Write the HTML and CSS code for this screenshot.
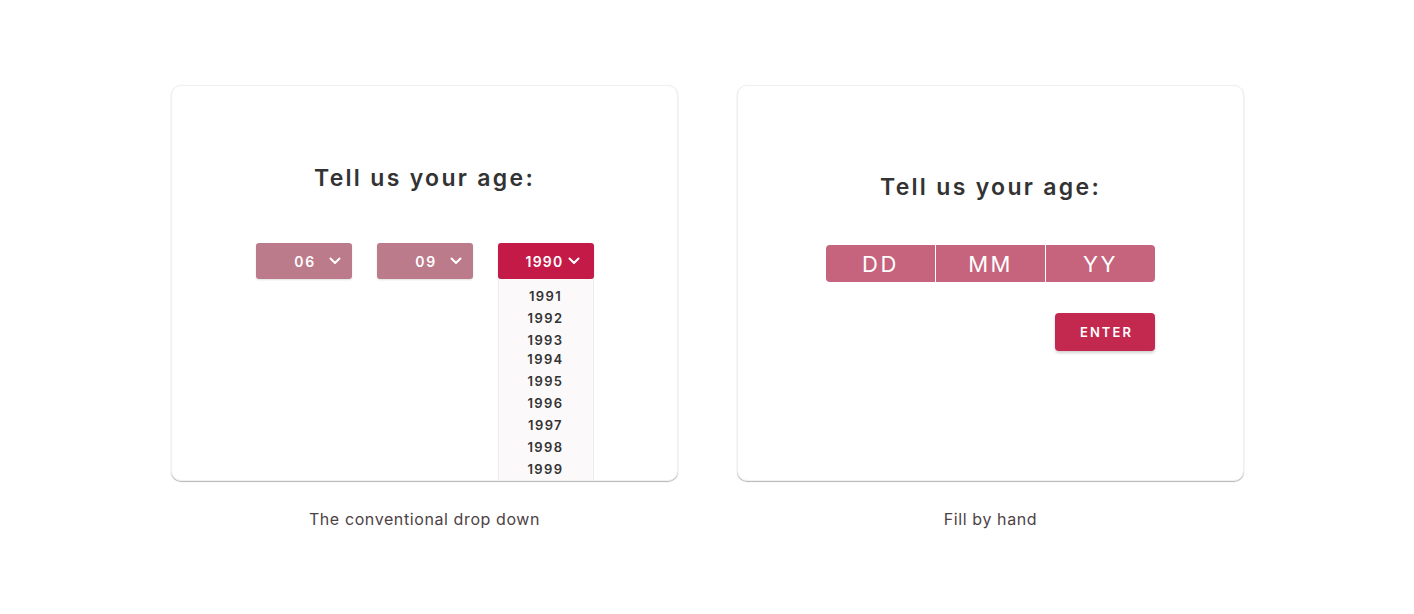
FILE: index.html
```html
<!DOCTYPE html>
<html lang="en">
<head>
<meta charset="utf-8">
<title>Tell us your age</title>
<link rel="stylesheet" href="styles.css">
</head>
<body>
<main class="stage">
  <section class="panel">
    <div class="card card-left">
      <h2 class="title">Tell us your age:</h2>
      <div class="selects">
        <div class="select muted"><span class="val">06</span><svg class="chev" viewBox="0 0 12 8" width="12" height="8"><path d="M1.5 1.5 L6 6 L10.5 1.5" fill="none" stroke="#fff" stroke-width="2" stroke-linecap="round" stroke-linejoin="round"/></svg></div>
        <div class="select muted"><span class="val">09</span><svg class="chev" viewBox="0 0 12 8" width="12" height="8"><path d="M1.5 1.5 L6 6 L10.5 1.5" fill="none" stroke="#fff" stroke-width="2" stroke-linecap="round" stroke-linejoin="round"/></svg></div>
        <div class="select-wrap">
          <div class="select active"><span class="val">1990</span><svg class="chev" viewBox="0 0 12 8" width="12" height="8"><path d="M1.5 1.5 L6 6 L10.5 1.5" fill="none" stroke="#fff" stroke-width="2" stroke-linecap="round" stroke-linejoin="round"/></svg></div>
          <ul class="list">
            <li>1991</li>
            <li>1992</li>
            <li>1993</li>
            <li class="tight">1994</li>
            <li>1995</li>
            <li>1996</li>
            <li>1997</li>
            <li>1998</li>
            <li>1999</li>
            <li class="tight">2000</li>
          </ul>
        </div>
      </div>
    </div>
    <p class="caption">The conventional drop down</p>
  </section>
  <section class="panel">
    <div class="card card-right">
      <h2 class="title">Tell us your age:</h2>
      <div class="fields">
        <div class="field">DD</div>
        <div class="field">MM</div>
        <div class="field">YY</div>
      </div>
      <div class="actions">
        <button class="enter">ENTER</button>
      </div>
    </div>
    <p class="caption">Fill by hand</p>
  </section>
</main>
</body>
</html>
```

FILE: styles.css
```css
* { box-sizing: border-box; }
html, body { margin: 0; padding: 0; background: #fff; }
body {
  font-family: "Inter", "Rubik", "Noto Sans", sans-serif;
  color: #333;
}
.stage {
  display: flex;
  justify-content: center;
  gap: 59px;
  padding-top: 85px;
  padding-left: 1px;
}
.panel {
  width: 507px;
  display: flex;
  flex-direction: column;
  align-items: center;
}
.card {
  width: 507px;
  height: 396px;
  background: #fff;
  border-radius: 10px;
  border: 1px solid #f0f0f0;
  box-shadow: 0 1px 1px rgba(0,0,0,0.28), 0 0 2px rgba(0,0,0,0.04);
  overflow: hidden;
  display: flex;
  flex-direction: column;
  align-items: center;
}
.title {
  margin: 0;
  font-size: 23px;
  line-height: 30px;
  font-weight: 600;
  letter-spacing: 2.3px;
  color: #333;
}
.card-left .title { margin-top: 77px; }
.card-right .title { margin-top: 86px; }

.selects {
  display: flex;
  gap: 25px;
  margin-top: 50px;
  align-items: flex-start;
  height: 100%;
  padding-left: 1px;
}
.select {
  width: 96px;
  height: 36px;
  border-radius: 3px;
  display: grid;
  grid-template-columns: 24px 1fr 24px;
  align-items: center;
  color: #fff;
  font-size: 14px;
  font-weight: 600;
  letter-spacing: 1.6px;
  box-shadow: 0 1px 2px rgba(0,0,0,0.12);
}
.select .val { grid-column: 2; text-align: center; padding-left: 2px; }
.select .chev { grid-column: 3; margin-left: 1px; }
.muted { background: #bc7b8a; }
.active { background: #c31a48; }
.active .val { letter-spacing: 1.2px; padding-left: 0; margin-left: -3px; }
.active .chev { margin-left: -2px; }
.select-wrap {
  width: 96px;
  display: flex;
  flex-direction: column;
  height: 100%;
}
.list {
  list-style: none;
  margin: 0;
  padding: 6px 0 0;
  flex: 1;
  background: #fcf9fa;
  border-left: 1px solid #f1eaec;
  border-right: 1px solid #f1eaec;
}
.list li {
  text-align: center;
  font-size: 13px;
  font-weight: 600;
  letter-spacing: 1.4px;
  line-height: 22px;
  height: 22px;
  color: #333;
  padding-right: 1px;
}
.list li.tight { margin-top: -3px; }

.fields {
  margin-top: 43px;
  display: flex;
  gap: 1px;
  width: 329px;
  height: 37px;
  border-radius: 4px;
  overflow: hidden;
}
.field {
  flex: 1;
  background: #c6637d;
  color: #fff;
  font-size: 22px;
  font-weight: 400;
  letter-spacing: 2.5px;
  display: flex;
  align-items: center;
  justify-content: center;
}
.actions {
  width: 329px;
  display: flex;
  justify-content: flex-end;
  margin-top: 31px;
}
.enter {
  width: 100px;
  height: 38px;
  border: 0;
  border-radius: 4px;
  background: #c3284f;
  color: #fff;
  font-family: inherit;
  font-size: 13px;
  font-weight: 600;
  letter-spacing: 2.1px;
  box-shadow: 0 2px 3px rgba(0,0,0,0.18);
  padding: 0 0 0 3px;
}
.caption {
  margin: 28px 0 0;
  font-size: 16px;
  line-height: 20px;
  color: #4d4245;
  font-weight: 400;
  letter-spacing: 0.6px;
}
```
